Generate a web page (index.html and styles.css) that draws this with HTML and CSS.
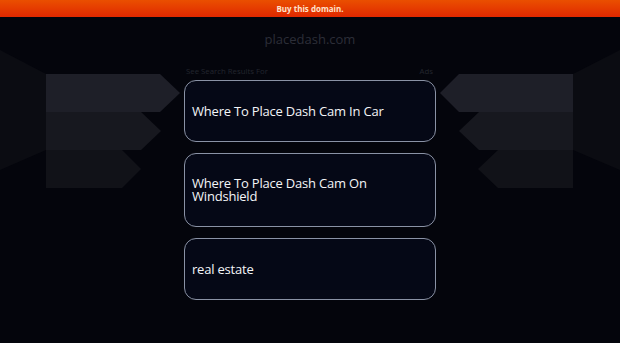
FILE: index.html
```html
<!DOCTYPE html>
<html>
<head>
<meta charset="utf-8">
<link rel="stylesheet" href="styles.css">
</head>
<body>
<div class="page">
  <svg class="deco" width="620" height="343" viewBox="0 0 620 343" aria-hidden="true">
    <polygon points="0,50 46,74 46,150 0,170" fill="#0b0c12"/>
    <polygon points="46,74 160,74 180,93 160,112 46,112" fill="#1e1f28"/>
    <polygon points="46,112 141,112 161,131 141,150 46,150" fill="#17181f"/>
    <polygon points="46,150 122,150 141,169 122,188 46,188" fill="#111218"/>
    <polygon points="620,50 573,74 573,150 620,170" fill="#0b0c12"/>
    <polygon points="573,74 459,74 440,93 459,112 573,112" fill="#1e1f28"/>
    <polygon points="573,112 479,112 459,131 479,150 573,150" fill="#17181f"/>
    <polygon points="573,150 498,150 478,169 498,188 573,188" fill="#111218"/>
  </svg>
  <header class="topbar">Buy this domain.</header>
  <div class="domain">placedash.com</div>
  <main class="results">
    <div class="labels"><span>See Search Results For</span><span>Ads</span></div>
    <a class="card" href="#">Where To Place Dash Cam In Car</a>
    <a class="card tall" href="#">Where To Place Dash Cam On Windshield</a>
    <a class="card" href="#">real estate</a>
  </main>
</div>
</body>
</html>
```
FILE: styles.css
```css
html, body {
  margin: 0;
  padding: 0;
  background: #04050c;
}
.page {
  position: relative;
  width: 620px;
  height: 343px;
  overflow: hidden;
  font-family: "Open Sans", "Noto Sans", sans-serif;
  background: #04050c;
}
.deco {
  position: absolute;
  left: 0;
  top: 0;
}
.topbar {
  position: relative;
  height: 17px;
  line-height: 17px;
  text-align: center;
  font-size: 8px;
  font-weight: 700;
  color: #fde3cc;
  background: linear-gradient(#ea4f00, #e02800);
}
.domain {
  position: relative;
  text-align: center;
  margin-top: 13px;
  font-size: 13px;
  line-height: 18px;
  color: #2c2e38;
}
.results {
  position: relative;
  width: 252px;
  margin: 18px auto 0;
  display: flex;
  flex-direction: column;
  gap: 11px;
}
.labels {
  display: flex;
  justify-content: space-between;
  font-size: 7.8px;
  line-height: 10px;
  color: #23252e;
  padding: 0 3px 0 2px;
  margin-bottom: -7px;
}
.card {
  display: flex;
  align-items: center;
  box-sizing: border-box;
  height: 62px;
  padding: 0 14px 0 7px;
  border: 1px solid #8a92a5;
  border-radius: 12px;
  background: #050816;
  color: #f4f5f8;
  font-size: 13px;
  line-height: 13px;
  letter-spacing: -0.2px;
  text-decoration: none;
}
.card.tall {
  height: 74px;
}
```
